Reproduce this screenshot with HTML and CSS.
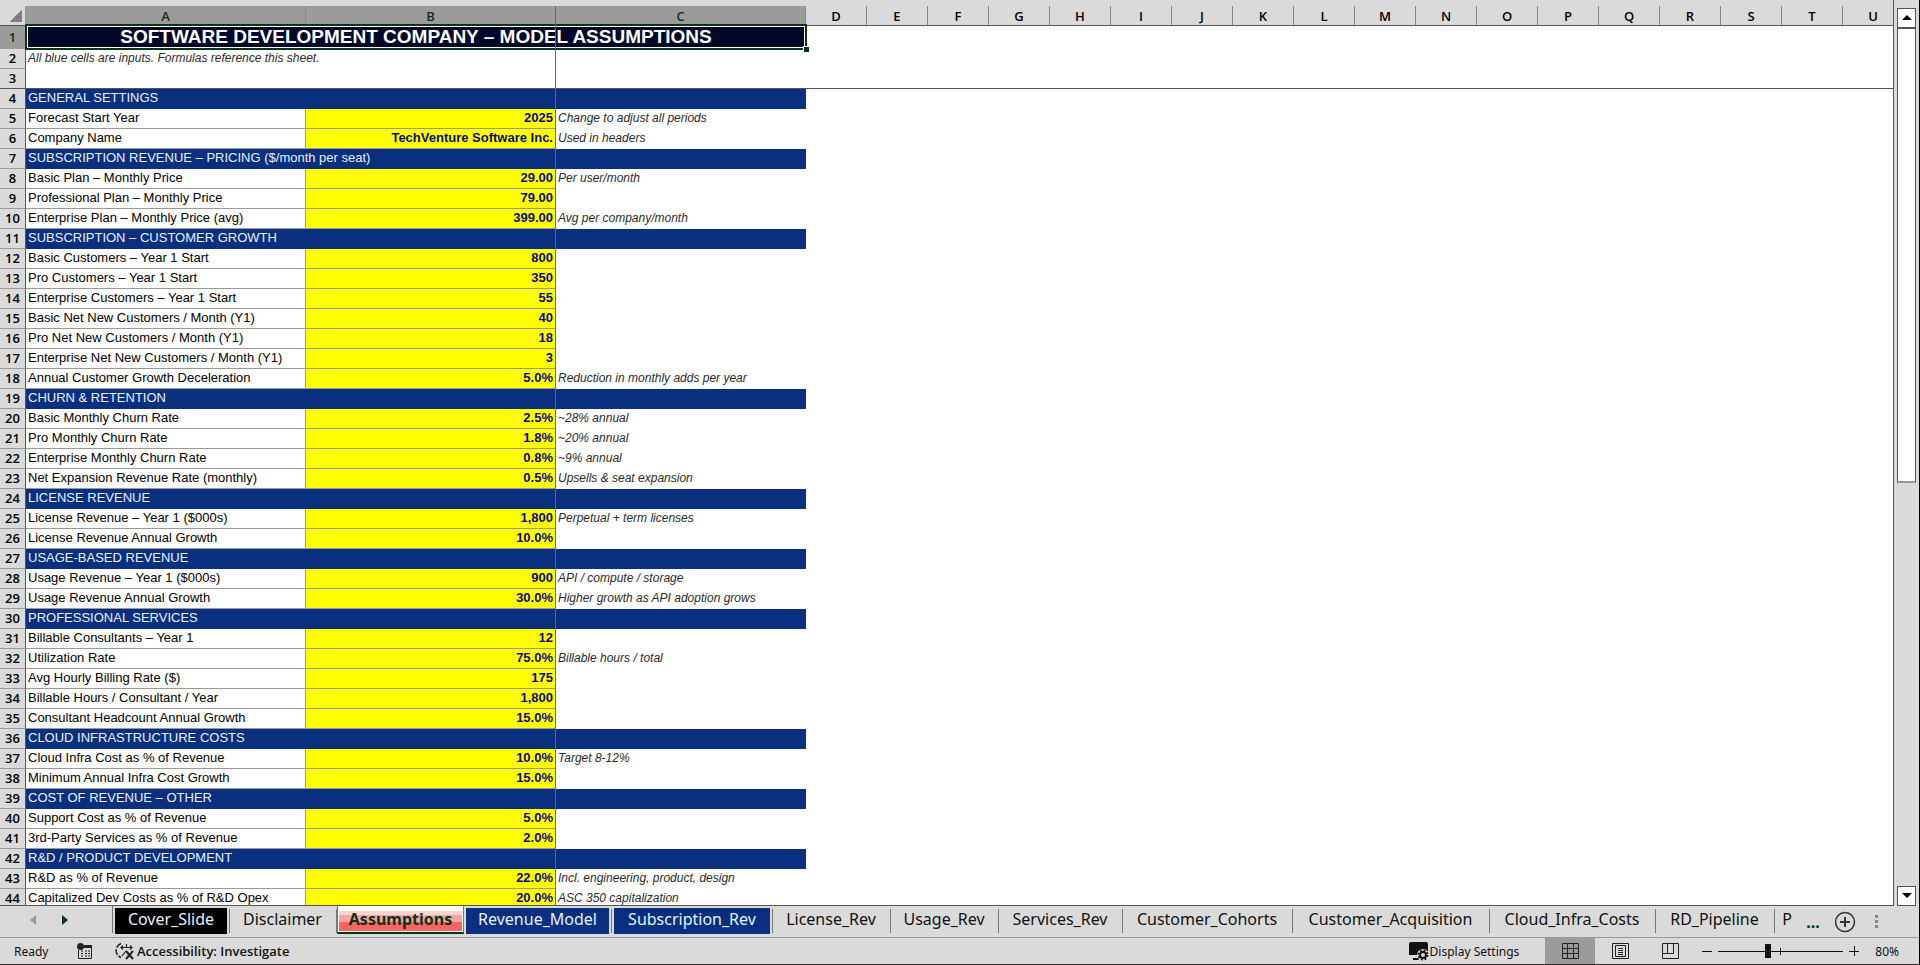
FILE: index.html
```
<!DOCTYPE html>
<html lang="en">
<head>
  <meta charset="UTF-8">
  <meta name="viewport" content="width=device-width, initial-scale=1.0">
  <title>Software Development Company – Model Assumptions</title>
  <link rel="stylesheet" href="styles.css">
</head>
<body>
  <div class="app">
    <div class="workspace">
      <main class="sheet">
        <table class="grid">
          <colgroup>
            <col class="col-num">
            <col class="col-a">
            <col class="col-b">
            <col class="col-c">
            <col class="col-std" span="18">
          </colgroup>
          <thead>
            <tr>
              <th class="corner"></th>
              <th class="picked">A</th><th class="picked">B</th><th class="picked">C</th>
              <th>D</th><th>E</th><th>F</th><th>G</th><th>H</th><th>I</th><th>J</th><th>K</th><th>L</th>
              <th>M</th><th>N</th><th>O</th><th>P</th><th>Q</th><th>R</th><th>S</th><th>T</th><th>U</th>
            </tr>
          </thead>
          <!-- Frozen rows -->
          <tbody class="frozen">
            <tr class="title-row"><th class="picked">1</th><td class="title" colspan="3">SOFTWARE DEVELOPMENT COMPANY – MODEL ASSUMPTIONS<span class="fill-handle"></span></td><td colspan="18"></td></tr>
            <tr><th>2</th><td class="intro" colspan="2">All blue cells are inputs. Formulas reference this sheet.</td><td colspan="19"></td></tr>
            <tr class="freeze-row"><th>3</th><td colspan="21"></td></tr>
          </tbody>
          <tbody>
            <tr class="section"><th>4</th><td colspan="3">GENERAL SETTINGS</td></tr>
            <tr><th>5</th><td>Forecast Start Year</td><td>2025</td><td>Change to adjust all periods</td></tr>
            <tr><th>6</th><td>Company Name</td><td>TechVenture Software Inc.</td><td>Used in headers</td></tr>
            <tr class="section"><th>7</th><td colspan="3">SUBSCRIPTION REVENUE – PRICING ($/month per seat)</td></tr>
            <tr><th>8</th><td>Basic Plan – Monthly Price</td><td>29.00</td><td>Per user/month</td></tr>
            <tr><th>9</th><td>Professional Plan – Monthly Price</td><td>79.00</td><td></td></tr>
            <tr><th>10</th><td>Enterprise Plan – Monthly Price (avg)</td><td>399.00</td><td>Avg per company/month</td></tr>
            <tr class="section"><th>11</th><td colspan="3">SUBSCRIPTION – CUSTOMER GROWTH</td></tr>
            <tr><th>12</th><td>Basic Customers – Year 1 Start</td><td>800</td><td></td></tr>
            <tr><th>13</th><td>Pro Customers – Year 1 Start</td><td>350</td><td></td></tr>
            <tr><th>14</th><td>Enterprise Customers – Year 1 Start</td><td>55</td><td></td></tr>
            <tr><th>15</th><td>Basic Net New Customers / Month (Y1)</td><td>40</td><td></td></tr>
            <tr><th>16</th><td>Pro Net New Customers / Month (Y1)</td><td>18</td><td></td></tr>
            <tr><th>17</th><td>Enterprise Net New Customers / Month (Y1)</td><td>3</td><td></td></tr>
            <tr><th>18</th><td>Annual Customer Growth Deceleration</td><td>5.0%</td><td>Reduction in monthly adds per year</td></tr>
            <tr class="section"><th>19</th><td colspan="3">CHURN &amp; RETENTION</td></tr>
            <tr><th>20</th><td>Basic Monthly Churn Rate</td><td>2.5%</td><td>~28% annual</td></tr>
            <tr><th>21</th><td>Pro Monthly Churn Rate</td><td>1.8%</td><td>~20% annual</td></tr>
            <tr><th>22</th><td>Enterprise Monthly Churn Rate</td><td>0.8%</td><td>~9% annual</td></tr>
            <tr><th>23</th><td>Net Expansion Revenue Rate (monthly)</td><td>0.5%</td><td>Upsells &amp; seat expansion</td></tr>
            <tr class="section"><th>24</th><td colspan="3">LICENSE REVENUE</td></tr>
            <tr><th>25</th><td>License Revenue – Year 1 ($000s)</td><td>1,800</td><td>Perpetual + term licenses</td></tr>
            <tr><th>26</th><td>License Revenue Annual Growth</td><td>10.0%</td><td></td></tr>
            <tr class="section"><th>27</th><td colspan="3">USAGE-BASED REVENUE</td></tr>
            <tr><th>28</th><td>Usage Revenue – Year 1 ($000s)</td><td>900</td><td>API / compute / storage</td></tr>
            <tr><th>29</th><td>Usage Revenue Annual Growth</td><td>30.0%</td><td>Higher growth as API adoption grows</td></tr>
            <tr class="section"><th>30</th><td colspan="3">PROFESSIONAL SERVICES</td></tr>
            <tr><th>31</th><td>Billable Consultants – Year 1</td><td>12</td><td></td></tr>
            <tr><th>32</th><td>Utilization Rate</td><td>75.0%</td><td>Billable hours / total</td></tr>
            <tr><th>33</th><td>Avg Hourly Billing Rate ($)</td><td>175</td><td></td></tr>
            <tr><th>34</th><td>Billable Hours / Consultant / Year</td><td>1,800</td><td></td></tr>
            <tr><th>35</th><td>Consultant Headcount Annual Growth</td><td>15.0%</td><td></td></tr>
            <tr class="section"><th>36</th><td colspan="3">CLOUD INFRASTRUCTURE COSTS</td></tr>
            <tr><th>37</th><td>Cloud Infra Cost as % of Revenue</td><td>10.0%</td><td>Target 8-12%</td></tr>
            <tr><th>38</th><td>Minimum Annual Infra Cost Growth</td><td>15.0%</td><td></td></tr>
            <tr class="section"><th>39</th><td colspan="3">COST OF REVENUE – OTHER</td></tr>
            <tr><th>40</th><td>Support Cost as % of Revenue</td><td>5.0%</td><td></td></tr>
            <tr><th>41</th><td>3rd-Party Services as % of Revenue</td><td>2.0%</td><td></td></tr>
            <tr class="section"><th>42</th><td colspan="3">R&amp;D / PRODUCT DEVELOPMENT</td></tr>
            <tr><th>43</th><td>R&amp;D as % of Revenue</td><td>22.0%</td><td>Incl. engineering, product, design</td></tr>
            <tr><th>44</th><td>Capitalized Dev Costs as % of R&amp;D Opex</td><td>20.0%</td><td>ASC 350 capitalization</td></tr>
          </tbody>
        </table>
        <div class="freeze-line"></div>
      </main>
      <div class="scrollbar">
        <button class="scroll-btn" aria-label="Scroll up"><svg width="10" height="6" viewBox="0 0 10 6"><path d="M5 0l5 5H0z"/></svg></button>
        <div class="scroll-track"><div class="scroll-thumb"></div></div>
        <button class="scroll-btn" aria-label="Scroll down"><svg width="10" height="6" viewBox="0 0 10 6"><path d="M0 0h10L5 5z"/></svg></button>
      </div>
    </div>

    <nav class="tabbar">
      <div class="tab-arrows">
        <button class="prev" aria-label="Previous sheet"><svg width="6" height="10" viewBox="0 0 6 10"><path d="M6 0v10L0 5z"/></svg></button>
        <button class="next" aria-label="Next sheet"><svg width="6" height="10" viewBox="0 0 6 10"><path d="M0 0v10l6-5z"/></svg></button>
      </div>
      <div class="tabs">
        <button class="tab dark">Cover_Slide</button>
        <button class="tab">Disclaimer</button>
        <button class="tab active">Assumptions</button>
        <button class="tab blue">Revenue_Model</button>
        <button class="tab blue">Subscription_Rev</button>
        <button class="tab">License_Rev</button>
        <button class="tab">Usage_Rev</button>
        <button class="tab">Services_Rev</button>
        <button class="tab">Customer_Cohorts</button>
        <button class="tab">Customer_Acquisition</button>
        <button class="tab">Cloud_Infra_Costs</button>
        <button class="tab">RD_Pipeline</button>
        <button class="tab cut">P</button>
      </div>
      <div class="tab-tools">
        <button class="more" aria-label="More sheets">...</button>
        <button aria-label="New sheet">
          <svg width="22" height="22" viewBox="0 0 22 22" fill="none" stroke="#333"><circle cx="11" cy="11" r="9.5" stroke-width="1.5"/><path d="M11 6v10M6 11h10" stroke-width="2"/></svg>
        </button>
        <span class="dots"><i></i><i></i><i></i></span>
      </div>
    </nav>

    <footer class="status">
      <span class="ready">Ready</span>
      <button class="macro" aria-label="Record macro">
        <svg width="16" height="16" viewBox="0 0 16 16">
          <path d="M1.5 7v8.500h13V2.500H7" fill="none" stroke="#222"/>
          <path d="M7 2h8v3H7z" fill="#222"/>
          <circle cx="3.500" cy="3.500" r="3.500" fill="#222"/>
          <path d="M4 8h2M8 8h2M11 8h2M4 10.500h2M8 10.500h2M11 10.500h2M4 13h2M8 13h2M11 13h2" stroke="#222"/>
        </svg>
      </button>
      <button class="access">
        <svg width="20" height="18" viewBox="0 0 20 18" fill="none" stroke="#222">
          <path d="M6 1.500C-.5 4-.5 13 6 15.500" stroke-width="1.500" stroke-dasharray="6 1.500"/>
          <path d="M6 5.500h11M8 3.500l-2 2 2 2M15 3.500l2 2-2 2M11.500 2v4M11 9l-4 5" stroke-width="1.200"/>
          <path d="M11 9l7 8M18 9l-7 8" stroke-width="2"/>
        </svg>
        Accessibility: Investigate
      </button>
      <div class="status-right">
        <button class="display">
          <svg width="20" height="19" viewBox="0 0 20 19">
            <path d="M2 0h15a2 2 0 0 1 2 2v11H0V2a2 2 0 0 1 2-2z" fill="#111"/>
            <path d="M4 17h6" stroke="#111" stroke-width="2"/>
            <circle cx="14" cy="13" r="6" fill="#dadada"/>
            <circle cx="14" cy="13" r="3" fill="none" stroke="#111" stroke-width="2"/>
            <circle cx="14" cy="13" r="4.500" fill="none" stroke="#111" stroke-width="2" stroke-dasharray="1.800 1.734"/>
          </svg>
          Display Settings
        </button>
        <button class="view on" aria-label="Normal view">
          <svg width="17" height="17" viewBox="0 0 17 17" fill="none" stroke="#222"><path d="M.5.5h16v15H.5zM5.500.5v15M11.500.5v15M.5 5.500h16M.5 10.500h16"/></svg>
        </button>
        <button class="view" aria-label="Page layout">
          <svg width="17" height="17" viewBox="0 0 17 17" fill="none" stroke="#222"><path d="M.5.5h16v15H.5zM3.500 2.500h10v11h-10zM6 5.500h5M6 7.500h5M6 9.500h5M6 11.500h5"/></svg>
        </button>
        <button class="view" aria-label="Page break preview">
          <svg width="17" height="17" viewBox="0 0 17 17" fill="none" stroke="#222"><path d="M.5.5h16v15H.5zM.5 10.500h11V.5M5.500.5v10"/></svg>
        </button>
        <div class="zoom">
          <button aria-label="Zoom out"><svg width="10" height="10" viewBox="0 0 10 10"><path d="M0 5.500h10" stroke="#111"/></svg></button>
          <input type="range" min="10" max="190" value="80" aria-label="Zoom level">
          <button aria-label="Zoom in"><svg width="10" height="10" viewBox="0 0 10 10"><path d="M0 5.500h10M5.500 0v10" stroke="#111"/></svg></button>
        </div>
        <button class="percent">80%</button>
      </div>
    </footer>
  </div>
</body>
</html>
```
FILE: styles.css
```
* {
  box-sizing: border-box;
}
body {
  margin: 0;
  background: #dadada;
  color: #000;
  font-family: "Liberation Sans", Arial, sans-serif;
  font-size: 13px;
}
button {
  border: none;
  background: none;
  padding: 0;
  margin: 0;
  color: inherit;
  font: inherit;
  cursor: pointer;
}
svg {
  display: block;
}
.app {
  height: 100vh;
  display: flex;
  flex-direction: column;
  border-right: 1px solid #000;
  border-bottom: 1px solid #3a2528;
}
.workspace {
  flex: 1;
  min-height: 0;
  display: flex;
}

/* Sheet */
.sheet {
  position: relative;
  flex: 1;
  min-width: 0;
  overflow: hidden;
  padding-top: 6px;
  background: linear-gradient(#dadada 25px, #fff 25px);
  border-right: 1px solid #555;
  border-bottom: 1px solid #555;
}
.grid {
  width: 1904px;
  table-layout: fixed;
  border-collapse: separate;
  border-spacing: 0;
}
.col-num { width: 26px; }
.col-a { width: 280px; }
.col-b { width: 250px; }
.col-c { width: 250px; }
.col-std { width: 61px; }
.grid th,
.grid td {
  height: 20px;
  padding: 0 2px;
  line-height: 18px;
  vertical-align: top;
  white-space: nowrap;
  overflow: hidden;
}
.grid th {
  background: #dadada;
  font-family: "Open Sans", "Noto Sans", sans-serif;
  font-weight: 600;
  font-size: 13px;
  padding: 0;
  border-right: 1px solid #555;
  border-bottom: 1px solid #999;
}
.grid thead th {
  padding-top: 1px;
  border-right-color: #888;
  border-bottom-color: #555;
}
.grid th.picked {
  background: #9b9b9b;
  color: #0b3018;
}
.grid thead th.corner {
  border-right: 1px solid #999;
  background: linear-gradient(135deg, #dadada 50%, #808080 50%) 10px 4px / 12px 12px no-repeat #dadada;
}
tbody td {
  border-right: 1px solid #999;
  border-bottom: 1px solid #999;
}
tbody td:nth-child(3) {
  background: #ff0;
  color: #0b0b80;
  font-weight: bold;
  text-align: right;
}
tbody td:nth-child(4) {
  border: none;
  color: #2a2a2a;
  font-style: italic;
  font-size: 12px;
}
.grid .section td {
  border: none;
  background: #0a2f7e;
  color: #e6f2ff;
}
.grid .frozen td {
  border: none;
  background: none;
  color: #2a2a2a;
}
.grid .freeze-row th,
.grid .freeze-row td {
  border-bottom: 1px solid #555;
}
.grid .intro {
  font-style: italic;
  font-size: 12px;
}
.grid .title-row th {
  height: 23px;
  line-height: 22px;
}
.grid .frozen .title {
  position: relative;
  overflow: visible;
  height: 23px;
  background: #03082a;
  color: #fff;
  font-size: 19px;
  font-weight: bold;
  line-height: 22px;
  text-align: center;
}
/* selection frame */
.title::after {
  content: "";
  position: absolute;
  inset: -2px -1px -1px;
  border: 2px solid #0b3318;
  box-shadow: inset 0 0 0 1px #fff;
}
.fill-handle {
  position: absolute;
  right: -3px;
  bottom: -3px;
  z-index: 1;
  width: 6px;
  height: 6px;
  background: #0b3318;
  border: 1px solid #fff;
  border-width: 1px 0 0 1px;
}
.freeze-line {
  position: absolute;
  top: 6px;
  bottom: 0;
  left: 555px;
  border-left: 1px solid #666;
}

/* Scrollbar */
.scrollbar {
  width: 25px;
  padding: 8px 3px 0;
  display: flex;
  flex-direction: column;
}
.scroll-btn {
  height: 20px;
  display: flex;
  align-items: center;
  justify-content: center;
  background: #fff;
  border: 1px solid #555;
}
.scroll-track {
  flex: 1;
}
.scroll-thumb {
  height: 53%;
  background: #fff;
  border: 1px solid #555;
  border-bottom: 2px solid #999;
}

/* Sheet tabs */
.tabbar {
  height: 32px;
  display: flex;
  border-bottom: 1px solid #999;
}
.tab-arrows {
  width: 113px;
  padding: 1px 0 0 30px;
  display: flex;
  gap: 26px;
  align-items: center;
  border-right: 1px solid #777;
  height: 27px;
}
.prev { fill: #999; }
.next { fill: #0b3318; }
.tabs {
  flex: 1;
  min-width: 0;
  overflow: hidden;
  display: grid;
  grid-template-columns: 117px 107px 127px 148px 161px 118px 108px 124px 170px 197px 166px 119px 26px;
  align-items: start;
}
.tab {
  position: relative;
  height: 29px;
  padding: 0 2px 3px 0;
  font-family: "Noto Sans", "Open Sans", sans-serif;
  font-size: 16px;
  line-height: 24px;
  white-space: nowrap;
  color: #111;
}
.tab::after {
  content: "";
  position: absolute;
  top: 3px;
  right: 0;
  height: 24px;
  border-right: 1px solid #777;
}
.tab.dark,
.tab.blue {
  padding: 0 3px 3px 2px;
  background: linear-gradient(#000, #000) 2px 2px / calc(100% - 5px) 26px no-repeat;
  color: #e6f2ff;
}
.tab.blue {
  background-image: linear-gradient(#0a2f7e, #0a2f7e);
}
.tab.active {
  height: 28px;
  padding: 0;
  background: linear-gradient(#fbd5d5 4px, #f3a6a6 4px, #f3a6a6 11px, #f8645f 11px) 1px 5px / calc(100% - 2px) 20px no-repeat #fff;
  border: 1px solid #777;
  border-top: none;
  border-bottom: 2px solid #0b3318;
  color: #0b3318;
  font-weight: bold;
}
.tab.active::after,
.tab.cut::after {
  display: none;
}
.tab-tools {
  width: 120px;
  padding-left: 6px;
  display: flex;
  gap: 13px;
  align-items: center;
}
.more {
  width: 16px;
  font: bold 16px/20px "Noto Sans", "Open Sans", sans-serif;
  color: #0b3318;
}
.dots {
  display: flex;
  flex-direction: column;
  gap: 2px;
  padding-left: 6px;
}
.dots i {
  width: 3px;
  height: 3px;
  background: #888;
}

/* Status bar */
.status {
  height: 26px;
  padding-left: 14px;
  display: flex;
  align-items: center;
  font-family: "Noto Sans", "Open Sans", sans-serif;
  font-size: 12px;
  color: #111;
}
.ready {
  width: 63px;
}
.access {
  margin-left: 22px;
  display: flex;
  gap: 2px;
  align-items: center;
  font-family: "Open Sans", "Noto Sans", sans-serif;
  font-size: 13px;
  font-weight: 600;
}
.status-right {
  height: 100%;
  margin-left: auto;
  padding-right: 20px;
  display: flex;
  align-items: center;
}
.display {
  margin-right: 26px;
  display: flex;
  gap: 1px;
  align-items: center;
}
.view {
  width: 50px;
  height: 100%;
  display: flex;
  align-items: center;
  justify-content: center;
}
.view.on {
  background: #9b9b9b;
}
.zoom {
  padding: 0 16px 0 7px;
  display: flex;
  gap: 6px;
  align-items: center;
}
.zoom input {
  appearance: none;
  width: 125px;
  height: 14px;
  margin: 0;
  background:
    linear-gradient(#111, #111) 50% 50% / 1px 7px no-repeat,
    linear-gradient(#111, #111) 0 50% / 100% 1px no-repeat;
}
.zoom input::-webkit-slider-thumb {
  appearance: none;
  width: 6px;
  height: 14px;
  background: #111;
}
```
